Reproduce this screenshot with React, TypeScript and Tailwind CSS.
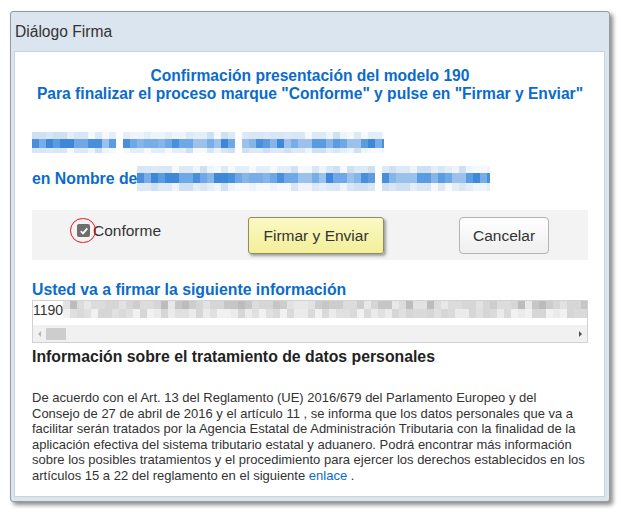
import React from "react";

const BLUE = "#0b6bcb";

const BLUE_LIGHT = ["#e4eef9", "#d8e6f6", "#eef4fb", "#cfe0f3", "#f5f9fd", "#dde9f7"];
const BLUE_MID = ["#5b9be0", "#6fa8e6", "#86b5e9", "#4a8fdc", "#9cc2ec", "#3f87d8", "#78ade7"];
const GRAY_TOP = ["#d6d6d6", "#cdcdcd", "#e2e2e2", "#c6c6c6", "#dcdcdc", "#bcbcbc", "#e8e8e8"];
const GRAY_BOT = ["#e0e0e0", "#d6d6d6", "#ebebeb", "#f1f1f1", "#dadada"];

function pick(list: string[], i: number, r: number, seed: number) {
  const n = (i * 9301 + r * 4271 + seed * 49297 + ((i * i) % 17) * 131) % 233280;
  return list[n % list.length];
}

// pixelated (blurred) text
function Mosaic({
  width,
  rows,
  seed,
  gaps = [],
  block = 7,
}: {
  width: number;
  rows: { h: number; palette: string[] }[];
  seed: number;
  gaps?: number[];
  block?: number;
}) {
  const cols = Math.ceil(width / block);
  const height = rows.reduce((s, r) => s + r.h, 0);
  let y = 0;
  return (
    <svg width={width} height={height} className="block shrink-0">
      {rows.map((row, r) => {
        const top = y;
        y += row.h;
        return Array.from({ length: cols }).map((_, i) => {
          if (gaps.includes(i)) return null;
          return (
            <rect
              key={`${r}-${i}`}
              x={i * block}
              y={top}
              width={block}
              height={row.h}
              fill={pick(row.palette, i, r, seed)}
            />
          );
        });
      })}
    </svg>
  );
}

export default function App() {
  return (
    <div
      className="w-[621px] h-[517px] bg-white pl-[10px] pt-[11px] overflow-hidden"
      style={{ fontFamily: '"Liberation Sans", Arial, sans-serif' }}
    >
      <div className="w-[600px] h-[491px] flex flex-col border border-[#9a9a9a] rounded-[3px] bg-[#dbe5ef] pl-[3px] pr-[4px] pb-[4px] shadow-[3px_3px_4px_rgba(0,0,0,0.45)]">
        {/* title */}
        <div className="h-[39px] shrink-0 flex items-center pl-[1px] text-[15.6px] text-[#333]">
          Diálogo Firma
        </div>

        {/* content */}
        <div className="flex-1 bg-white border border-[#c8d3dd] pl-[17px] pr-[16px] pt-[15px]">
          <div className="text-center font-bold text-[15.6px] leading-[18px]" style={{ color: BLUE }}>
            <div>Confirmación presentación del modelo 190</div>
            <div className="whitespace-nowrap">Para finalizar el proceso marque "Conforme" y pulse en "Firmar y Enviar"</div>
          </div>

          <div className="mt-[29px]">
            <Mosaic
              width={352}
              seed={3}
              gaps={[12, 29]}
              rows={[
                { h: 7, palette: BLUE_LIGHT },
                { h: 9, palette: BLUE_MID },
                { h: 5, palette: BLUE_LIGHT },
              ]}
            />
          </div>

          <div className="mt-[13px] flex items-center">
            <span className="font-bold text-[15.8px] leading-[18px]" style={{ color: BLUE }}>
              en Nombre de
            </span>
            <Mosaic
              width={353}
              seed={7}
              gaps={[34]}
              rows={[
                { h: 7, palette: BLUE_LIGHT },
                { h: 10, palette: BLUE_MID },
                { h: 8, palette: BLUE_LIGHT },
              ]}
            />
          </div>

          {/* action band */}
          <div className="mt-[19px] h-[50px] bg-[#f3f3f3] flex items-start">
            <label className="ml-[45px] mt-[9px] flex items-center text-[15.5px] text-[#333]">
              <span className="relative w-[13px] h-[13px] rounded-[2px] bg-[#6e6e6e] flex items-center justify-center">
                <svg width="10" height="10" viewBox="0 0 10 10">
                  <path d="M1.8 5.2 L4 7.4 L8.3 2.4" fill="none" stroke="#fff" strokeWidth="1.8" />
                </svg>
                <span className="absolute left-[-7px] top-[-6px] w-[26px] h-[25px] rounded-full border-[1.5px] border-[#e8141c]" />
              </span>
              <span className="ml-[3px]">Conforme</span>
            </label>
            <button className="ml-[87px] mt-[7px] w-[136px] h-[37px] rounded-[3px] border border-[#8e8c60] bg-gradient-to-b from-[#fbf9c4] to-[#f3ef98] text-[15.5px] text-[#333] shadow-[2px_2px_3px_rgba(0,0,0,0.35)]">
              Firmar y Enviar
            </button>
            <button className="ml-[75px] mt-[7px] w-[90px] h-[37px] rounded-[4px] border border-[#b4b4b4] bg-gradient-to-b from-white to-[#efefef] text-[15.5px] text-[#333]">
              Cancelar
            </button>
          </div>

          <div className="mt-[21px] font-bold text-[15.8px] leading-[18px]" style={{ color: BLUE }}>
            Usted va a firmar la siguiente información
          </div>

          {/* scroll box */}
          <div className="mt-[1px] h-[43px] border border-[#d2d2d2] flex flex-col">
            <div className="flex items-start h-[24px] overflow-hidden">
              <span className="text-[14px] leading-[18px] text-[#333]">1190</span>
              <Mosaic
                width={525}
                seed={11}
                rows={[
                  { h: 8, palette: GRAY_TOP },
                  { h: 9, palette: GRAY_BOT },
                ]}
              />
            </div>
            <div className="h-[17px] bg-[#f1f1f1] flex items-center">
              <svg width="10" height="10" viewBox="0 0 10 10" className="ml-[2px]">
                <path d="M6 2 L3 5 L6 8 Z" fill="#b5b5b5" />
              </svg>
              <span className="ml-[1px] w-[20px] h-[12px] bg-[#cdcdcd]" />
              <span className="flex-1" />
              <svg width="10" height="10" viewBox="0 0 10 10" className="mr-[2px]">
                <path d="M4 2 L7 5 L4 8 Z" fill="#505050" />
              </svg>
            </div>
          </div>

          <div className="mt-[5px] font-bold text-[15.8px] leading-[18px] text-[#222]">
            Información sobre el tratamiento de datos personales
          </div>

          <p className="mt-[24px] text-[13px] leading-[15.5px] text-[#333] whitespace-nowrap">
            <span className="block">De acuerdo con el Art. 13 del Reglamento (UE) 2016/679 del Parlamento Europeo y del</span>
            <span className="block">Consejo de 27 de abril de 2016 y el artículo 11 , se informa que los datos personales que va a</span>
            <span className="block">facilitar serán tratados por la Agencia Estatal de Administración Tributaria con la finalidad de la</span>
            <span className="block">aplicación efectiva del sistema tributario estatal y aduanero. Podrá encontrar más información</span>
            <span className="block">sobre los posibles tratamientos y el procedimiento para ejercer los derechos establecidos en los</span>
            <span className="block">
              artículos 15 a 22 del reglamento en el siguiente <span style={{ color: BLUE }}>enlace</span> .
            </span>
          </p>
        </div>
      </div>
    </div>
  );
}
